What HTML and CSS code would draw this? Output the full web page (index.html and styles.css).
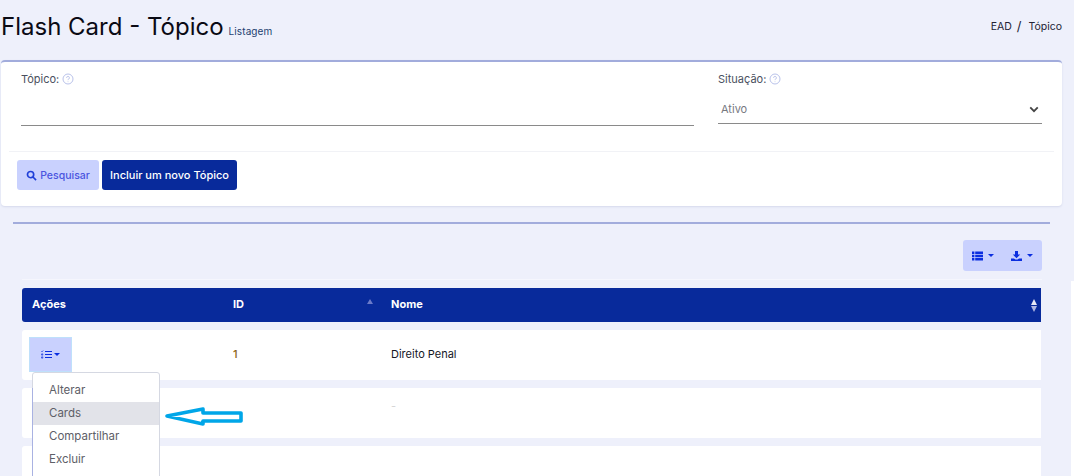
FILE: index.html
```html
<!DOCTYPE html>
<html lang="pt">
<head>
<meta charset="utf-8">
<title>Flash Card - Tópico</title>
<link rel="stylesheet" href="styles.css">
</head>
<body>
<header class="page-head">
  <div class="title-group">
    <h1 class="title">Flash Card - Tópico</h1>
    <span class="subtitle">Listagem</span>
  </div>
  <nav class="crumbs"><span>EAD</span><span class="crumb-sep">/</span><span>Tópico</span></nav>
</header>

<section class="filter-card">
  <div class="fields">
    <div class="field field-topic">
      <div class="field-label">Tópico: <svg class="help" viewBox="0 0 12 12"><circle cx="6" cy="6" r="5"/><path d="M4.6 4.8a1.4 1.4 0 1 1 2.1 1.2c-.5.3-.7.5-.7 1.1M6 8.5v.6"/></svg></div>
      <div class="line-input"></div>
    </div>
    <div class="field field-status">
      <div class="field-label">Situação: <svg class="help" viewBox="0 0 12 12"><circle cx="6" cy="6" r="5"/><path d="M4.6 4.8a1.4 1.4 0 1 1 2.1 1.2c-.5.3-.7.5-.7 1.1M6 8.5v.6"/></svg></div>
      <div class="line-select"><span>Ativo</span><svg class="chev" viewBox="0 0 12 8"><path d="M1.5 1.5 6 6l4.5-4.5"/></svg></div>
    </div>
  </div>
  <div class="actions">
    <button class="btn btn-soft"><svg class="search" viewBox="0 0 12 12"><circle cx="5" cy="5" r="3.4"/><path d="M7.6 7.6 11 11"/></svg>Pesquisar</button>
    <button class="btn btn-dark">Incluir um novo Tópico</button>
  </div>
</section>

<section class="list-panel">
  <div class="toolbar">
    <div class="tool-group">
      <span class="tool"><svg class="ico" viewBox="0 0 11 9"><path d="M0 0h2.4v2.4H0zM3.2 0H11v2.4H3.2zM0 3.3h2.4v2.4H0zM3.2 3.3H11v2.4H3.2zM0 6.6h2.4V9H0zM3.2 6.6H11V9H3.2z"/></svg><i class="caret"></i></span>
      <span class="tool"><svg class="ico" viewBox="0 0 11 10"><path d="M4 0h3v3.6h2.2L5.5 7.2 1.8 3.6H4zM0 7.4h3l1.4 1.2h2.2L8 7.4h3V10H0z"/></svg><i class="caret"></i></span>
    </div>
  </div>
  <div class="table">
    <div class="row head">
      <div class="cell c-actions">Ações</div>
      <div class="cell c-id">ID<i class="sort-up"></i></div>
      <div class="cell c-name">Nome<span class="sort-both"><i></i><i></i></span></div>
    </div>
    <div class="row">
      <div class="cell c-actions"><span class="act-btn"><svg class="ico-list" viewBox="0 0 11 9"><path d="M4 1h7v1.1H4zM4 4h7v1.1H4zM4 7h7v1.1H4z"/><path class="tick" d="M.3 1.2 1 1.9 2.2.5M.6 3.9h1.2v1.2H.6zM.6 6.9h1.2v1.2H.6z"/></svg><i class="caret"></i></span></div>
      <div class="cell c-id"><span class="num">1</span></div>
      <div class="cell c-name">Direito Penal</div>
    </div>
    <div class="row"><div class="cell c-actions"></div><div class="cell c-id"></div><div class="cell c-name"><span class="dash">-</span></div></div>
    <div class="row"></div>
  </div>
  <ul class="menu">
    <li>Alterar</li>
    <li class="active">Cards</li>
    <li>Compartilhar</li>
    <li>Excluir</li>
  </ul>
  <svg class="arrow" viewBox="0 0 90 30"><path d="M7 16 43 9v4h38v8H43v3z"/></svg>
</section>
<div class="edge"></div>
</body>
</html>
```
FILE: styles.css
```css
* { box-sizing: border-box; }
html, body { margin: 0; height: 476px; overflow: hidden; }
body { position: relative; background: #eef0fb; font-family: "Inter", "Liberation Sans", sans-serif; color: #1e2430; font-size: 11px; }
.page-head { height: 60px; display: flex; justify-content: space-between; padding: 0 12px 0 1px; }
.title-group { display: flex; align-items: baseline; gap: 5px; padding-top: 12px; }
.title { margin: 0; font-size: 24px; font-weight: 400; color: #0a0a14; line-height: 30px; }
.subtitle { font-size: 10px; letter-spacing: .1px; color: #1d3f70; }
.crumbs { display: flex; gap: 5px; padding-top: 20px; font-size: 10.5px; color: #223; }
.crumb-sep { font-size: 13px; line-height: 12px; margin-right: 2px; }
.filter-card { margin-left: 1px; width: 1061px; height: 146px; background: #fff; border-top: 2px solid #a2acdc; border-radius: 4px; box-shadow: 0 1px 2px #d5d9ec; padding: 0 8px; }
.fields { display: flex; height: 90px; padding: 0 12px; border-bottom: 1px solid #f1f2f6; justify-content: space-between; }
.field-label { padding-top: 10px; font-size: 11px; line-height: 14px; color: #4a5060; display: flex; align-items: center; gap: 3px; }
.help { width: 12px; height: 12px; fill: none; stroke: #b9c2ea; stroke-width: 1; }
.field-topic { width: 673px; }
.field-status { width: 324px; }
.line-input { height: 40px; border-bottom: 1px solid #8a8a8a; }
.line-select { height: 38px; border-bottom: 1px solid #8a8a8a; display: flex; align-items: center; justify-content: space-between; padding: 9px 3px 0; color: #77797f; font-size: 11px; }
.chev { width: 10px; height: 7px; fill: none; stroke: #444; stroke-width: 2.2; }
.actions { display: flex; gap: 3px; padding: 8px 0 0 8px; }
.btn { height: 30px; border: 0; border-radius: 3px; font: 500 10.5px "Inter", "Liberation Sans", sans-serif; display: inline-flex; align-items: center; justify-content: center; padding: 0; }
.btn-soft { width: 82px; background: #c9d1fe; color: #4a55e0; gap: 3px; }
.btn-dark { width: 135px; background: #082a9b; color: #fff; font-size: 11px; }
.search { width: 11px; height: 11px; fill: none; stroke: #1f3fd8; stroke-width: 1.8; }
.list-panel { position: relative; overflow: hidden; margin: 16px 0 0 13px; width: 1037px; height: 254px; border-top: 2px solid #a2acdc; padding: 0 8px 0 9px; }
.toolbar { display: flex; justify-content: flex-end; padding-top: 16px; height: 56px; border-bottom: 1px solid #f5f6fd; }
.tool-group { width: 79px; height: 31px; background: #c9d1fe; border-radius: 3px; display: flex; align-items: center; gap: 17px; padding-left: 9px; }
.tool { display: inline-flex; align-items: center; gap: 5px; }
.ico { width: 11px; height: 10px; fill: #0b2ee0; }
.caret { display: inline-block; border: 3px solid transparent; border-top-color: #0b2ee0; border-bottom: 0; }
.table { display: flex; flex-direction: column; gap: 8px; padding-top: 8px; }
.row { display: flex; align-items: center; height: 50px; background: #fff; width: 1019px; border-radius: 3px 0 0 3px; font-size: 11px; color: #14161f; flex: none; }
.row.head { height: 34px; background: #082a9b; color: #fff; font-weight: 700; }
.cell { padding: 0 0 2px 10px; position: relative; height: 100%; display: flex; align-items: center; }
.c-actions { width: 201px; }
.c-id { width: 158px; }
.c-name { flex: 1; }
.num { color: #8a6412; font-weight: 500; }
.dash { color: #d5d5d5; position: relative; top: -6px; }
.sort-up { position: absolute; right: 8px; top: 11px; border: 3.5px solid transparent; border-bottom: 5px solid #6b7ac9; border-top: 0; }
.sort-both { position: absolute; right: 4px; top: 11px; display: flex; flex-direction: column; gap: 1px; }
.sort-both i { display: block; border: 3.5px solid transparent; }
.sort-both i:first-child { border-top: 0; border-bottom: 6px solid #e6e8f5; }
.sort-both i:last-child { border-bottom: 0; border-top: 6px solid #aeb6e2; }
.act-btn { margin-left: -3px; width: 43px; height: 35px; background: #c9d1fe; border: 1px solid #bfe0fb; display: flex; align-items: center; justify-content: center; gap: 2px; }
.ico-list { width: 11px; height: 9px; fill: #0b2ee0; }
.ico-list .tick { fill: none; stroke: #0b2ee0; stroke-width: .7; }
.menu { position: absolute; left: 19px; top: 148px; width: 128px; height: 120px; margin: 0; padding: 6px 0; list-style: none; background: #fff; border: 1px solid #d5d8e2; border-radius: 3px; font-size: 11.5px; color: #5e6068; }
.menu::before { content: ""; position: absolute; left: -1px; top: 15px; bottom: 0; width: 1px; background: #a9b2e2; }
.menu li { height: 23px; line-height: 23px; padding-left: 16px; }
.menu li.active { background: #e2e3e9; }
.arrow { position: absolute; left: 147px; top: 176px; width: 90px; height: 30px; fill: none; stroke: #00a6e8; stroke-width: 3.6; stroke-linejoin: round; }
.edge { position: absolute; left: 1071px; top: 281px; width: 3px; height: 195px; background: #fff; }
```
